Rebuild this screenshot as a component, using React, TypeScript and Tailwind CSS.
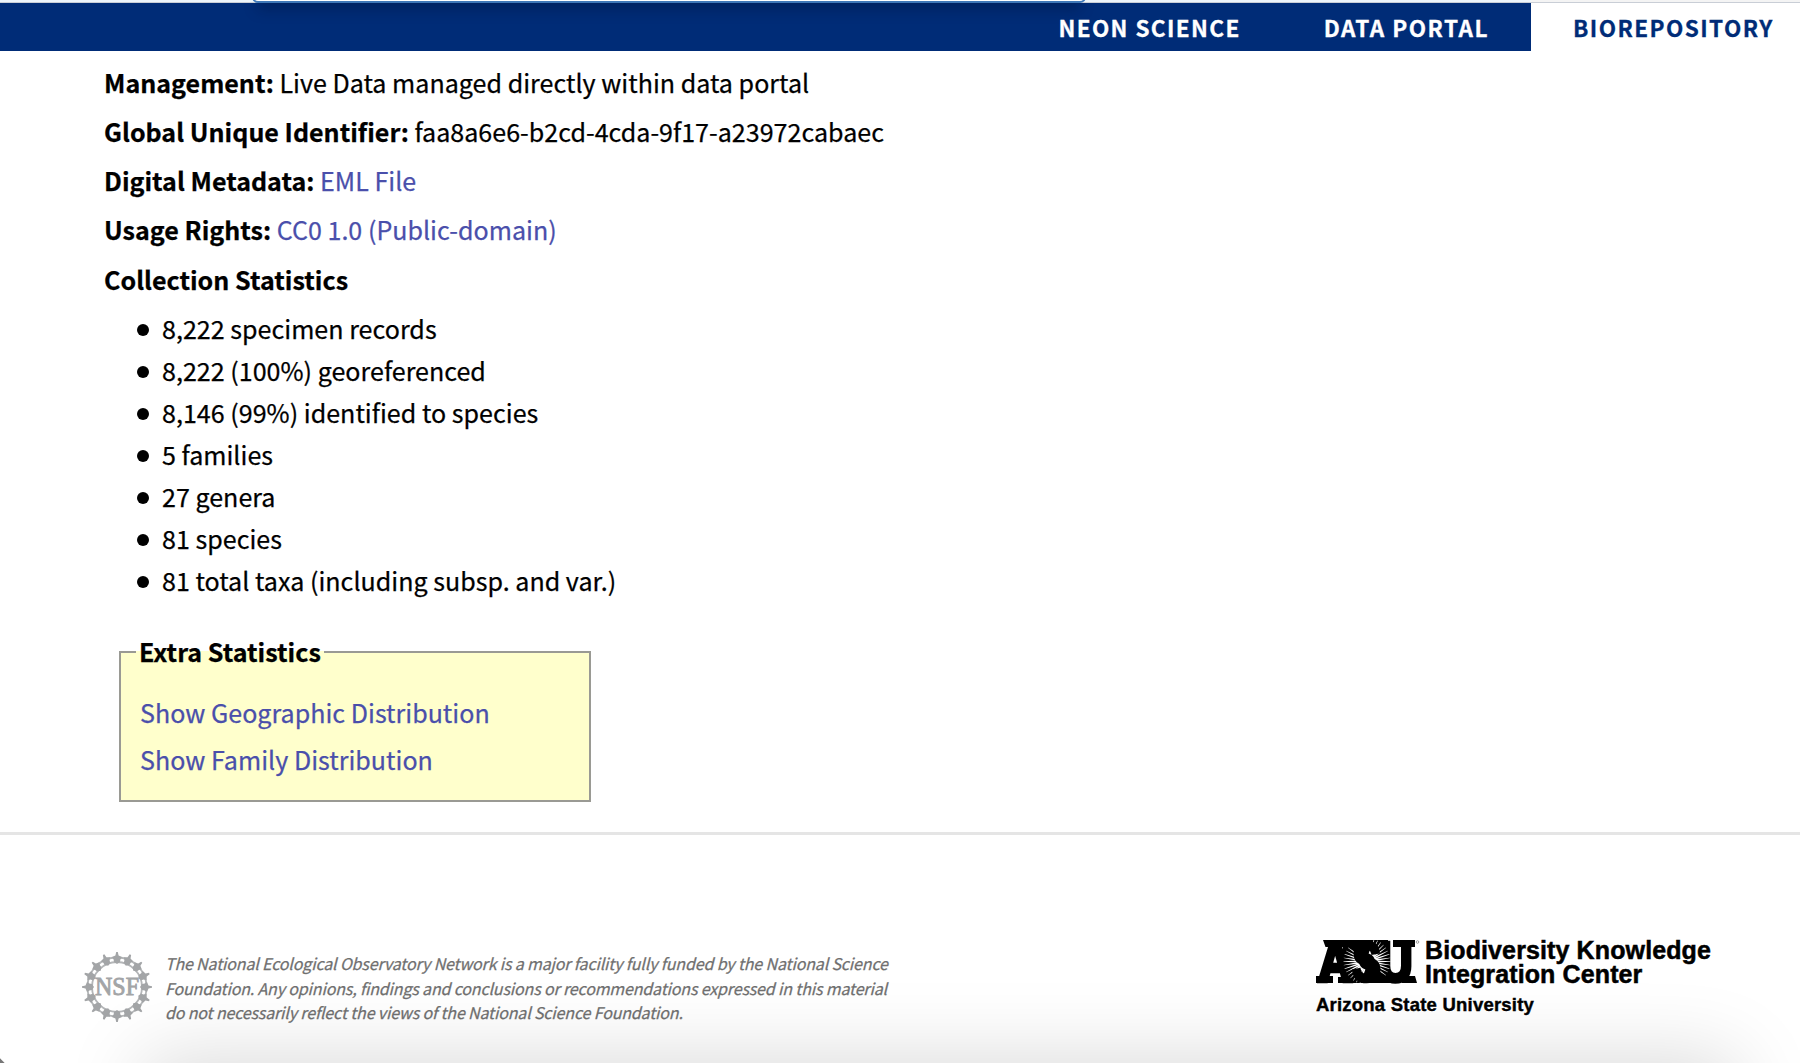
import type { ReactNode } from "react";

function Field({ label, children }: { label: string; children?: ReactNode }) {
  return (
    <p className="mb-[7.3px] h-[42px] leading-[42px] whitespace-nowrap">
      <b className="font-bold">{label}</b> {children}
    </p>
  );
}

const link = "text-[#4a4fab]";

const stats = [
  "8,222 specimen records",
  "8,222 (100%) georeferenced",
  "8,146 (99%) identified to species",
  "5 families",
  "27 genera",
  "81 species",
  "81 total taxa (including subsp. and var.)",
];

function NsfLogo() {
  const spokes = Array.from({ length: 16 }, (_, i) => i * 22.5);
  return (
    <svg className="h-[72px] w-[72px] shrink-0" viewBox="-36 -36 72 72" fill="none">
      <circle r="29.5" stroke="#b4b6b8" strokeWidth="1.8" />
      <circle r="25" stroke="#b4b6b8" strokeWidth="1.8" />
      {spokes.map((a) => (
        <path
          key={a}
          transform={`rotate(${a})`}
          d="M-.8 -35H.8L1.6 -31.5L5 -30L3.400 -27.6L3 -25L0 -23L-3 -25L-3.400 -27.6L-5 -30L-1.6 -31.5Z"
          fill="#a3a5a7"
        />
      ))}
      <text
        y="8"
        textAnchor="middle"
        textLength="44"
        lengthAdjust="spacingAndGlyphs"
        fontFamily="Liberation Serif, serif"
        fontSize="25"
        fill="#a3a5a7"
        stroke="#a3a5a7"
        strokeWidth="0.9"
      >
        NSF
      </text>
    </svg>
  );
}

function AsuLogo() {
  const left = Array.from({ length: 13 }, (_, i) => 108 + i * 9);
  const right = Array.from({ length: 13 }, (_, i) => -72 + i * 9);
  return (
    <svg className="h-[46px] w-[104px] shrink-0 overflow-visible" viewBox="0 0 104 46" fill="#000">
      {/* slab serifs and the dark ground behind the sunburst */}
      <path d="M7 1H42V8H9.500ZM0 37H17V44H0ZM77 1H99V8H77ZM86 37H99L101 44H86Z" />
      <path d="M27 1H50V44H22V38H27Z" />
      <path d="M50 1H72V36L76 44H50Z" />
      <text
        transform="scale(0.84 1)"
        x="3 75"
        y="42"
        fontFamily="Liberation Sans, Arial, sans-serif"
        fontWeight="700"
        fontSize="55"
        stroke="#000"
        strokeWidth="4.500"
      >
        AU
      </text>
      <g fill="#fff">
        {[...left, ...right].map((a) => (
          <path key={a} d="M8 -.9L23.500 -.2V.2L8 .9Z" transform={`translate(51 22.500) rotate(${a})`} />
        ))}
      </g>
      <text
        transform="scale(0.78 1)"
        x="46.500"
        y="41.5"
        fontFamily="Liberation Sans, Arial, sans-serif"
        fontWeight="700"
        fontSize="55"
        stroke="#000"
        strokeWidth="3.500"
      >
        S
      </text>
      <circle cx="101.500" cy="3" r="1.300" fill="none" stroke="#777" strokeWidth="0.7" />
    </svg>
  );
}

export default function App() {
  return (
    <div className="relative flex h-[1063px] w-[1800px] flex-col overflow-hidden bg-white font-['Noto_Sans_CJK_SC',sans-serif] text-[25.06px] text-black">
      <div className="flex h-[3px] border-b border-[#c9ced6] bg-[#edf5fb]">
        <div className="w-[1531px]" />
        <div className="grow bg-[#f4f4f4]" />
      </div>
      <nav className="relative flex h-12 shrink-0 justify-end overflow-hidden bg-[#002c77] text-[22.5px] leading-[48px] font-bold whitespace-nowrap text-white [-webkit-text-stroke:0.3px_currentColor]">
        <div className="absolute -top-2 left-[262px] h-2 w-[814px] shadow-[0_2px_14px_4px_rgba(0,15,50,0.35)]" />
        <a className="mr-[83px] tracking-[1.4px]">NEON SCIENCE</a>
        <a className="mr-[42px] tracking-[1.500px]">DATA PORTAL</a>
        <a className="h-[48px] w-[269px] shrink-0 bg-white pl-[42px] tracking-[1.45px] text-[#002c77]">BIOREPOSITORY</a>
      </nav>
      <div className="absolute -top-[17px] left-[252px] h-5 w-[834px] rounded-b-md border-2 border-[#3f78b8] bg-white" />

      <main className="h-[781px] shrink-0 pt-[9.500px] pl-[104px] tracking-[0.015px] [-webkit-text-stroke:0.25px_currentColor]">
        <Field label="Management:">Live Data managed directly within data portal</Field>
        <Field label="Global Unique Identifier:">faa8a6e6-b2cd-4cda-9f17-a23972cabaec</Field>
        <Field label="Digital Metadata:">
          <a className={link}>EML File</a>
        </Field>
        <Field label="Usage Rights:">
          <a className={link}>CC0 1.0 (Public-domain)</a>
        </Field>
        <Field label="Collection Statistics" />
        <ul>
          {stats.map((s) => (
            <li key={s} className="flex h-[42px] items-center pl-[33px] leading-[42px] whitespace-nowrap">
              <span className="mt-[4px] mr-[13px] h-3 w-3 rounded-full bg-black" />
              {s}
            </li>
          ))}
        </ul>
        <section className="mt-[50px] ml-[15px] h-[151px] w-[472px] border-2 border-[#9a9a94] bg-[#ffffcc] pl-[19px]">
          <h2 className="-mt-[23px] -ml-[4px] h-[42px] w-max bg-[linear-gradient(#fff_21px,#ffffcc_21px)] px-[3px] leading-[42px] font-bold">
            Extra Statistics
          </h2>
          <a className={`mt-[17.500px] block h-[47px] leading-[47px] ${link}`}>Show Geographic Distribution</a>
          <a className={`block h-[47px] leading-[47px] ${link}`}>Show Family Distribution</a>
        </section>
      </main>

      <footer className="flex grow border-t-3 border-[#e5e5e5] pl-[81px]">
        <div className="mt-[116px]">
          <NsfLogo />
        </div>
        <p className="mt-[116px] ml-[12px] w-[1151px] text-[16px] leading-[24.700px] tracking-[-0.155px] whitespace-nowrap text-[#707070] italic [-webkit-text-stroke:0.25px_#707070]">
          The National Ecological Observatory Network is a major facility fully funded by the National Science
          <br />
          Foundation. Any opinions, findings and conclusions or recommendations expressed in this material
          <br />
          do not necessarily reflect the views of the National Science Foundation.
        </p>
        <div className="mt-[104px] w-[440px] shrink-0 font-['Liberation_Sans',Arial,sans-serif] font-bold">
          <div className="flex">
            <AsuLogo />
            <p className="-mt-[1px] ml-[5px] text-[25px] leading-[24px] tracking-[0.120px] whitespace-nowrap [-webkit-text-stroke:0.5px_#000]">
              Biodiversity Knowledge
              <br />
              Integration Center
            </p>
          </div>
          <p className="mt-[7px] text-[18.500px] leading-6 tracking-[0.220px] whitespace-nowrap [-webkit-text-stroke:0.4px_#000]">
            Arizona State University
          </p>
        </div>
      </footer>
      <div className="absolute top-[1080px] left-[165px] h-20 w-[1550px] shadow-[0_0_80px_22px_rgba(0,0,0,0.15)]" />
      <div className="absolute top-[1060px] -left-1 h-2 w-2 rotate-45 bg-[#777]" />
    </div>
  );
}
